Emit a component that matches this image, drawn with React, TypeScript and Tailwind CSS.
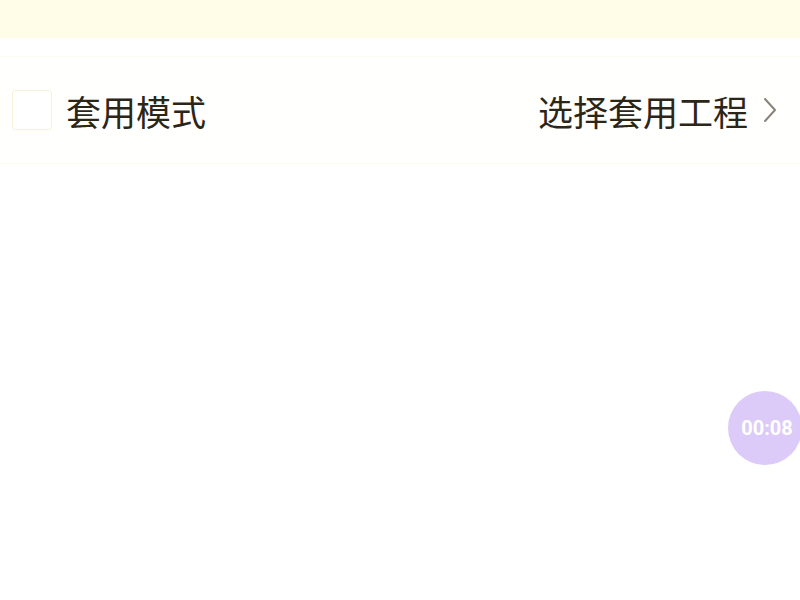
export default function App() {
  return (
    <div
      className="relative h-[600px] w-[800px] overflow-hidden bg-white"
      style={{ fontFamily: '"Noto Sans CJK SC", "Noto Sans", sans-serif' }}
    >
      {/* top band (its content is scrolled out of view) */}
      <div className="h-[38px] bg-[#fffde8]" />

      <div className="mt-[18px] flex h-[108px] items-center justify-between border-y border-[#fcfbef] bg-[#fffffd] pl-[12px] pr-[22px]">
        <div className="flex items-center gap-[14px]">
          <div className="h-[40px] w-[40px] rounded-[3px] border border-[#f5f0d6] bg-white" />
          <span className="text-[35px] leading-none text-[#2b2618]">套用模式</span>
        </div>
        <div className="flex items-center gap-[14px]">
          <span className="text-[35px] leading-none text-[#2b2618]">选择套用工程</span>
          <svg width="16" height="28" viewBox="0 0 16 28" fill="none">
            <path d="M3 3 L13 14 L3 25" stroke="#8a8478" strokeWidth="2" strokeLinecap="round" strokeLinejoin="round" />
          </svg>
        </div>
      </div>

      <div className="absolute left-[728px] top-[391px] flex h-[74px] w-[74px] items-center justify-center rounded-full bg-[#dccbf8]">
        <span
          className="pl-[4px] text-[20px] font-bold text-white"
          style={{ fontFamily: 'Roboto, sans-serif' }}
        >
          00:08
        </span>
      </div>
    </div>
  )
}
